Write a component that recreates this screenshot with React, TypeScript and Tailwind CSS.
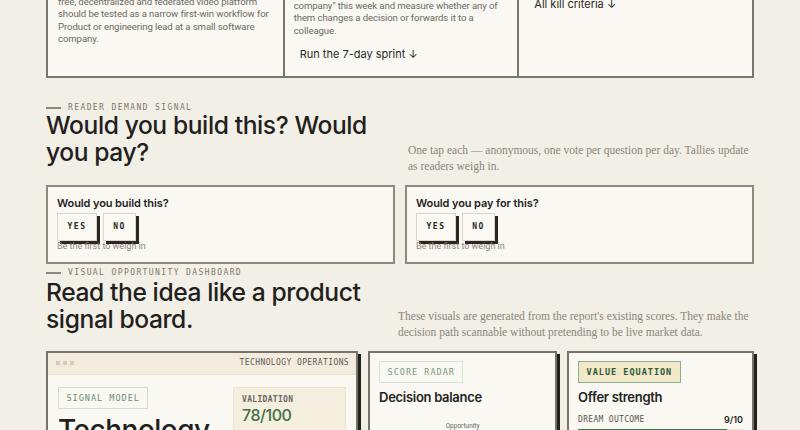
import React from "react";

const sans = "font-['Inter',sans-serif]";
const body = "font-['Roboto',sans-serif]";
const mono = "font-['DejaVu_Sans_Mono',monospace]";
const serif = "font-['Liberation_Serif',serif]";

function SectionLabel({ text }: { text: string }) {
  return (
    <div className="flex items-center gap-[7px]">
      <span className="block w-[15px] h-[2px] bg-[#8d887d]" />
      <span className={`${mono} text-[8px] leading-[10px] tracking-[1.4px] text-[#7d786d]`}>{text}</span>
    </div>
  );
}

function VoteCard({ title }: { title: string }) {
  return (
    <div className="border-2 border-[#8e897f] bg-[#f9f8f3] pt-[9px] pb-[10px] px-[9px]">
      <div className={`${sans} text-[11px] leading-[14px] font-semibold tracking-[-0.1px] text-[#25231f]`}>{title}</div>
      <div className="mt-[3px] flex gap-[6px]">
        <button className={`${mono} w-[40px] h-[28px] border border-[#dcd5c7] bg-[#faf9f4] shadow-[3px_3px_0_#2b2824] text-[8px] font-bold tracking-[1.5px] text-[#2b2824]`}>YES</button>
        <button className={`${mono} w-[33px] h-[28px] border border-[#dcd5c7] bg-[#faf9f4] shadow-[3px_3px_0_#2b2824] text-[8px] font-bold tracking-[1.5px] text-[#2b2824]`}>NO</button>
      </div>
      <div className={`${body} text-[9px] leading-[11px] text-[#8a857a]`}>Be the first to weigh in</div>
    </div>
  );
}

export default function App() {
  return (
    <div className="w-[800px] h-[430px] overflow-hidden bg-[#f2efe7]">
      <div className="px-[46px]">
        {/* Top box */}
        <div className="-mt-[20px] h-[98px] grid grid-cols-3 border-2 border-[#7a766d] bg-[#f9f8f3]">
          <div className="pl-[10px] pt-[13.5px]">
            <p className={`${body} text-[9.6px] leading-[12.5px] tracking-[-0.1px] text-[#6e6a62] whitespace-nowrap`}>
              free, decentralized and federated video platform<br />
              should be tested as a narrow first-win workflow for<br />
              Product or engineering lead at a small software<br />
              company.
            </p>
          </div>
          <div className="border-l-2 border-[#7a766d] pl-[9px] pt-[17.75px]">
            <p className={`${body} text-[9.6px] leading-[12.5px] tracking-[-0.1px] text-[#6e6a62] whitespace-nowrap`}>
              company" this week and measure whether any of<br />
              them changes a decision or forwards it to a<br />
              colleague.
            </p>
            <div className={`${sans} mt-[9.5px] ml-[6px] text-[11px] leading-[14px] text-[#2b2824]`}>Run the 7-day sprint ↓</div>
          </div>
          <div className="border-l-2 border-[#7a766d] pl-[15px] pt-[15px]">
            <div className={`${sans} text-[11px] leading-[14px] text-[#2b2824]`}>All kill criteria ↓</div>
          </div>
        </div>

        {/* Reader demand */}
        <div className="mt-[24.5px] flex items-end justify-between">
          <div>
            <SectionLabel text="READER DEMAND SIGNAL" />
            <h2 className={`${sans} -mt-[0.5px] w-[350px] pb-[7.5px] text-[24.6px] leading-[27px] font-medium tracking-[-0.4px] text-[#22201c]`}>
              Would you build this? Would you pay?
            </h2>
          </div>
          <p className={`${serif} w-[346px] text-[11.5px] leading-[16px] text-[#8a857a]`}>
            One tap each — anonymous, one vote per question per day. Tallies update<br />as readers weigh in.
          </p>
        </div>

        <div className="mt-[11px] grid grid-cols-2 gap-[10px]">
          <VoteCard title="Would you build this?" />
          <VoteCard title="Would you pay for this?" />
        </div>

        {/* Visual opportunity */}
        <div className="mt-[4.5px] flex items-end justify-between">
          <div>
            <SectionLabel text="VISUAL OPPORTUNITY DASHBOARD" />
            <h2 className={`${sans} mt-[0.5px] w-[350px] pb-[7px] text-[24.6px] leading-[27px] font-medium tracking-[-0.4px] text-[#22201c]`}>
              Read the idea like a product signal board.
            </h2>
          </div>
          <p className={`${serif} w-[356px] text-[11.5px] leading-[16px] text-[#8a857a]`}>
            These visuals are generated from the report's existing scores. They make the<br />decision path scannable without pretending to be live market data.
          </p>
        </div>

        <div className="mt-[11px] grid grid-cols-[1.67fr_1fr_1fr] gap-[10px] items-start">
          {/* Card 1 */}
          <div className="border-2 border-[#77736b] bg-[#f9f8f3] shadow-[3px_3px_0_#23211d] h-[140px]">
            <div className="h-[22px] bg-[#f3ecde] border-b border-[#e7e0cf] flex items-center justify-between pl-[8px] pr-[7px]">
              <div className="flex gap-[3px]">
                <span className="block w-[4px] h-[4px] bg-[#d6cdb4]" />
                <span className="block w-[4px] h-[4px] bg-[#d6cdb4]" />
                <span className="block w-[4px] h-[4px] bg-[#d6cdb4]" />
              </div>
              <span className={`${mono} text-[8px] tracking-[0.4px] text-[#5d5a52]`}>TECHNOLOGY OPERATIONS</span>
            </div>
            <div className="px-[10px] pt-[12px] flex justify-between">
              <div>
                <div className={`${mono} w-fit h-[22px] leading-[20px] px-[7.5px] border border-[#cfe0cf] text-[8.5px] tracking-[1px] text-[#6b8f70]`}>SIGNAL MODEL</div>
                <div className={`${sans} mt-[6px] text-[28px] leading-[30px] font-medium tracking-[-0.5px] text-[#22201c]`}>Technology</div>
              </div>
              <div className="w-[113px] h-[60px] bg-[#f5efdf] border border-[#ece4d0] pl-[8px] pt-[7px]">
                <div className={`${mono} text-[8px] leading-[10px] font-bold tracking-[0.3px] text-[#6b675f]`}>VALIDATION</div>
                <div className={`${sans} text-[16px] leading-[20px] font-medium tracking-[-0.5px] text-[#3f6e47]`}>78/100</div>
              </div>
            </div>
          </div>

          {/* Card 2 */}
          <div className="border-2 border-[#77736b] bg-[#f9f8f3] shadow-[3px_3px_0_#23211d] h-[140px] pl-[9px] pr-[9px] pt-[8.7px]">
            <div className={`${mono} w-fit h-[22px] leading-[20px] px-[7.5px] border border-[#d8e4d2] text-[8.5px] tracking-[1px] text-[#7a9a7e]`}>SCORE RADAR</div>
            <div className={`${sans} mt-[5px] text-[13px] leading-[18px] font-semibold tracking-[-0.3px] text-[#25231f]`}>Decision balance</div>
            <div className={`${body} mt-[16px] text-center text-[6.5px] leading-[8px] text-[#6b675f]`}>Opportunity</div>
            <svg width="167" height="60" viewBox="0 0 167 60" className="block">
              <polygon points="83.5,4 130,40 110,90 57,90 37,40" fill="none" stroke="#ddd5c2" strokeWidth="1" />
              <line x1="83.5" y1="4" x2="83.5" y2="60" stroke="#ddd5c2" strokeWidth="1" />
            </svg>
          </div>

          {/* Card 3 */}
          <div className="border-2 border-[#77736b] bg-[#f9f8f3] shadow-[3px_3px_0_#23211d] h-[140px] pl-[9px] pr-[9px] pt-[8.7px]">
            <div className={`${mono} w-fit h-[22px] leading-[20px] px-[7.5px] border border-[#8cae8a] bg-[#f1e7c9] text-[8.5px] font-bold tracking-[1px] text-[#2f5a36]`}>VALUE EQUATION</div>
            <div className={`${sans} mt-[5px] text-[13px] leading-[18px] font-semibold tracking-[-0.3px] text-[#25231f]`}>Offer strength</div>
            <div className="mt-[9px] flex justify-between items-center h-[10px]">
              <span className={`${mono} text-[8px] tracking-[0.3px] text-[#5a564e]`}>DREAM OUTCOME</span>
              <span className={`${sans} text-[9px] font-semibold text-[#2b2824]`}>9/10</span>
            </div>
            <div className="mt-[4px] h-[6px] bg-[#ebe3cf]">
              <div className="h-full bg-[#3e7a4a]" style={{ width: "90%" }} />
            </div>
          </div>
        </div>
      </div>
    </div>
  );
}
